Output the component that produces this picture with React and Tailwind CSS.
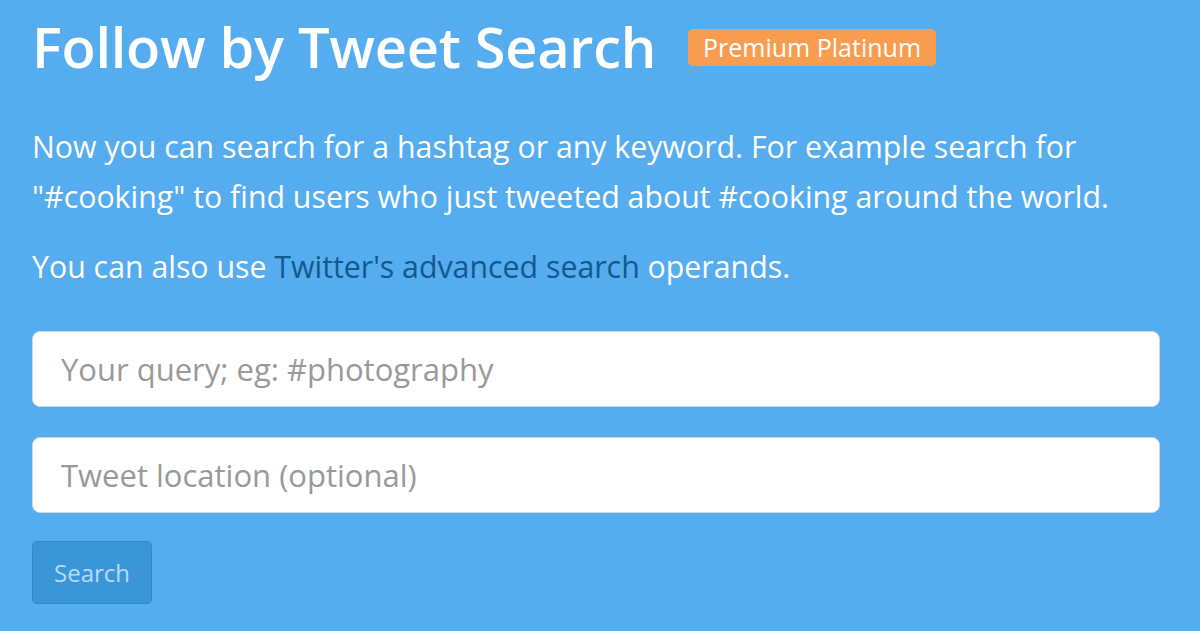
const App = () => (
  <div className="min-h-[631px] w-[1200px] bg-[#55acee] px-[32px] pt-[14px] font-['Open_Sans',sans-serif] text-white">
    {/* header */}
    <div className="flex items-center gap-[32px]">
      <h1 className="text-[56px] font-semibold leading-[64px] tracking-[-0.3px]">Follow by Tweet Search</h1>
      <span className="mt-[2px] rounded-[5px] bg-[#f89c4f] px-[15px] py-[2px] text-[25px] leading-[33px]">Premium Platinum</span>
    </div>

    {/* intro */}
    <p className="mt-[44px] w-[1128px] text-[30.3px] leading-[50px]">
      Now you can search for a hashtag or any keyword. For example search for "#cooking" to find users who just tweeted
      about #cooking around the world.
    </p>
    <p className="mt-[20px] text-[30.3px] leading-[50px]">
      You can also use <a className="text-[#12598c]">Twitter's advanced search</a> operands.
    </p>

    {/* form */}
    <div className="mt-[39px] flex w-[1128px] flex-col gap-[30px]">
      <input
        className="h-[76px] rounded-[8px] border border-[#cfd8df] bg-white px-[28px] text-[31px] text-gray-700 placeholder:text-[#999999] outline-none"
        placeholder="Your query; eg: #photography"
      />
      <input
        className="h-[76px] rounded-[8px] border border-[#cfd8df] bg-white px-[28px] text-[31px] text-gray-700 placeholder:text-[#999999] outline-none"
        placeholder="Tweet location (optional)"
      />
    </div>
    <button className="mt-[28px] h-[63px] w-[120px] rounded-[5px] border border-[#3587c8] bg-[#3b96d8] text-[24px] text-[#b7dcf6]">
      Search
    </button>
  </div>
)

export default App
